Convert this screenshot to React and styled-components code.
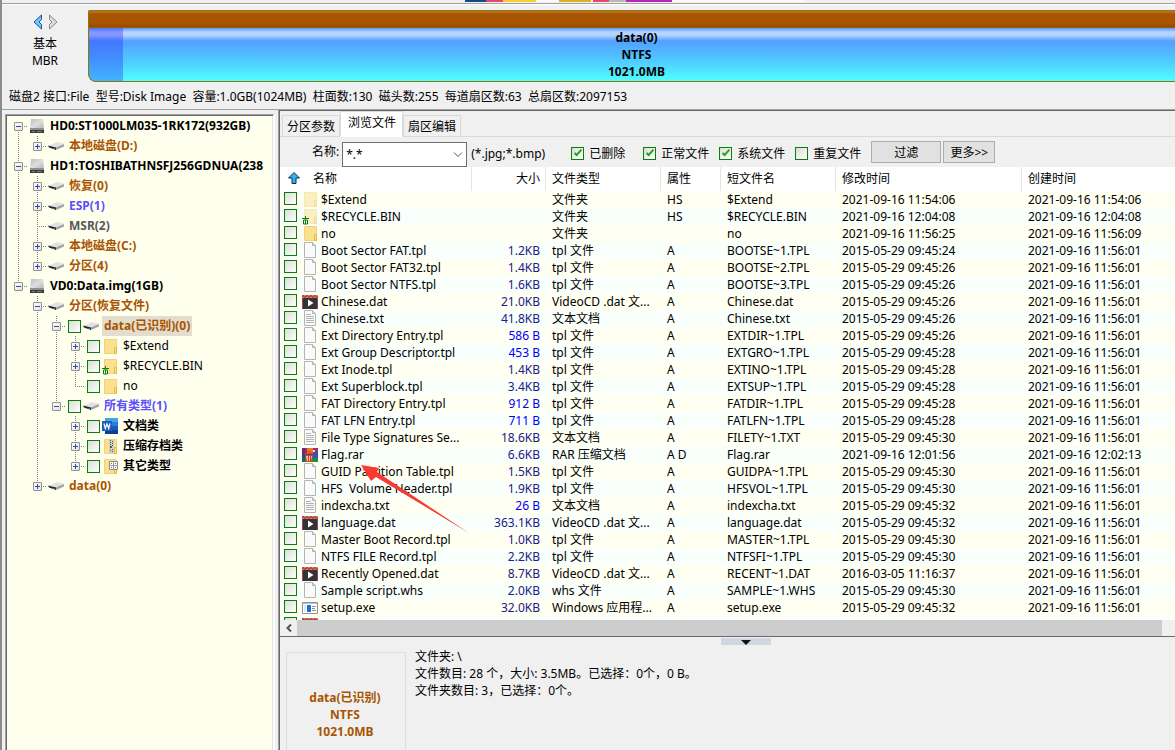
import React from "react";
import styled, { createGlobalStyle, css } from "styled-components";

const sans = `"Noto Sans", "Noto Sans CJK SC", sans-serif`;

const Global = createGlobalStyle`
  *, *::before, *::after { box-sizing: border-box; }
  html, body, #root { height: 100%; margin: 0; }
  body { background: #f0f0f0; color: #000; font: 12px/17px ${sans}; overflow: hidden; }
  button, input, select { font: inherit; color: inherit; margin: 0; }
`;

const Window = styled.div`
  height: 100vh;
  display: flex;
  flex-direction: column;
  border-left: 2px solid #8c8c8c;
  overflow: hidden;
`;

const Strip = styled.svg`
  display: block;
  flex: none;
  height: 3px;
  width: 100%;
`;

const DiskBar = styled.header`
  flex: none;
  display: flex;
  height: 80px;
  padding: 5px 0 0;
  border-top: 1px solid #a0a0a0;
  box-shadow: inset 0 1px #fff;
`;

const DiskNav = styled.div`
  width: 86px;
  flex: none;
  text-align: center;
  padding-top: 5px;
  span { display: block; }
`;

const NavButtons = styled.div`
  display: flex;
  justify-content: center;
  gap: 5px;
  height: 16px;
  margin-bottom: 5px;
`;

const IconButton = styled.button`
  border: 0;
  padding: 0;
  background: none;
  width: 10px;
  height: 16px;
  svg { display: block; }
`;

const Volume = styled.div`
  flex: 1;
  margin-top: 1px;
  height: 72px;
  border: 1px solid #8a7a00;
  border-right: 0;
  border-radius: 2px 0 0 8px;
  overflow: hidden;
  display: flex;
  flex-direction: column;
  background: #a85400;
`;

const VolumeCap = styled.div`
  height: 17px;
  flex: none;
  border-bottom: 1px solid #8a6a00;
  background: linear-gradient(#c07838, #a85400 20%, #a85400 80%, #964600);
`;

const VolumeBody = styled.div`
  flex: 1;
  text-align: center;
  font-weight: 700;
  padding-top: 1px;
  padding-left: 9px;
  background:
    linear-gradient(90deg, rgba(40, 40, 255, 0.35) 34px, transparent 34px),
    linear-gradient(#5c98ff 0, #b4d2ff 4px, #b8d4ff 7px, #52a0ff 13px, #50c8ff 60%, #50ffff 100%);
  span { display: block; }
`;

const DiskInfo = styled.div`
  flex: none;
  height: 27px;
  padding: 5px 0 0 7px;
  white-space: pre;
  border-bottom: 1px solid #a0a0a0;
`;

const Main = styled.main`
  flex: 1;
  min-height: 0;
  display: flex;
`;

const TreePane = styled.nav`
  width: 270px;
  flex: none;
  margin: 4px 4px 0 3px;
  border: solid;
  border-width: 1px 2px 0 1px;
  border-color: #a0a0a0 #fff #fff #a0a0a0;
  background: #ffffee;
  box-shadow: inset 1px 1px #696969, inset -1px 0 #e3e3e3;
  padding: 1px 2px 0 3px;
  overflow: hidden;
  white-space: nowrap;
`;

const TreeRow = styled.div`
  display: flex;
  align-items: center;
  height: 20px;
`;

const dots = css`
  background-image: repeating-linear-gradient(#808080 0 1px, transparent 1px 2px);
  background-size: 1px 100%;
  background-repeat: no-repeat;
`;

const Guide = styled.span`
  width: 19px;
  height: 20px;
  flex: none;
  ${(p) => p.$line && css`${dots} background-position: 9px 0;`}
`;

const Branch = styled.span`
  width: 19px;
  height: 20px;
  flex: none;
  display: grid;
  place-items: center;
  background-repeat: no-repeat;
  background-image:
    ${(p) => (p.$up ? "repeating-linear-gradient(#808080 0 1px, transparent 1px 2px)" : "none")},
    ${(p) => (p.$down ? "repeating-linear-gradient(#808080 0 1px, transparent 1px 2px)" : "none")},
    repeating-linear-gradient(90deg, #808080 0 1px, transparent 1px 2px);
  background-size: 1px 10px, 1px 10px, 10px 1px;
  background-position: 9px 0, 9px 10px, 9px 10px;
`;

const Expander = styled.button`
  width: 9px;
  height: 9px;
  padding: 0;
  border: 1px solid #919191;
  border-radius: 1px;
  background: linear-gradient(135deg, #fff, #e0e0e0);
  svg { display: block; }
`;

const TreeIcon = styled.span`
  display: flex;
  align-items: center;
  gap: 2px;
  margin-left: ${(p) => p.$gap}px;
  margin-right: ${(p) => (p.$kind === "hdd" ? 4 : p.$kind === "drive" ? 2 : 3)}px;
`;

const TreeLabel = styled.span`
  color: ${(p) => p.$color || "#000"};
  font-weight: ${(p) => (p.$plain ? 400 : 700)};
  line-height: 20px;
  padding: 0 2px;
  background: ${(p) => (p.$selected ? "#e2ddcc" : "none")};
`;

const Check = styled.input`
  appearance: none;
  flex: none;
  display: grid;
  place-items: center;
  width: 13px;
  height: 13px;
  border: 1px solid #0a7d0a;
  background: linear-gradient(135deg, #dcdcd7, #fff);
  &:checked::after {
    content: "";
    width: 4px;
    height: 8px;
    margin-top: -2px;
    border: solid #21a121;
    border-width: 0 2px 2px 0;
    transform: rotate(42deg);
  }
`;

const Right = styled.section`
  flex: 1;
  min-width: 0;
  display: flex;
  flex-direction: column;
  border: solid #696969;
  border-width: 1px 0 0 1px;
  box-shadow: -1px 0 #a0a0a0;
`;

const Tabs = styled.div`
  flex: none;
  display: flex;
  align-items: flex-end;
  height: 26px;
  padding-left: 2px;
  box-shadow: inset 0 -1px #d9d9d9;
`;

const Tab = styled.button`
  height: ${(p) => (p.$active ? 26 : 22)}px;
  padding: ${(p) => (p.$active ? "0 7px 3px" : "0 4px")};
  width: ${(p) => (p.$active ? 63 : 58)}px;
  border: 1px solid #d9d9d9;
  border-bottom-color: ${(p) => (p.$active ? "#fff" : "#d9d9d9")};
  background: ${(p) => (p.$active ? "#fff" : "#f0f0f0")};
  white-space: nowrap;
`;

const FilterBar = styled.div`
  flex: none;
  display: flex;
  align-items: center;
  height: 30px;
  padding: 2px 0 0 32px;
  white-space: nowrap;
`;

const MaskLabel = styled.label`
  padding-bottom: 4px;
`;

const Combo = styled.span`
  position: relative;
  margin: 2px 4px 0 3px;
  svg { position: absolute; right: 4px; top: 10px; pointer-events: none; }
`;

const Select = styled.select`
  appearance: none;
  display: block;
  width: 125px;
  height: 25px;
  border: 1px solid #707070;
  border-radius: 0;
  background: #fff;
  padding: 0 3px;
`;

const CheckLabel = styled.label`
  display: flex;
  align-items: center;
  gap: 5px;
  margin-right: ${(p) => p.$after || 10}px;
`;

const Hint = styled.span`
  width: 100px;
`;

const PushButton = styled.button`
  width: ${(p) => p.$w}px;
  height: 22px;
  margin: 0 2px 2px 0;
  padding: 0;
  border: 1px solid #adadad;
  background: #e1e1e1;
`;

const ListBox = styled.div`
  flex: none;
  height: 453px;
  overflow: hidden;
  background: #fff;
`;

const Table = styled.table`
  width: 100%;
  table-layout: fixed;
  border-collapse: separate;
  border-spacing: 0;
  th {
    height: 24px;
    padding: 0 6px 2px;
    font-weight: 400;
    text-align: left;
    border-right: 1px solid #e5e5e5;
    white-space: nowrap;
  }
  th:nth-child(2) { text-align: right; padding-right: 5px; }
  th:last-child { border: 0; }
  td {
    height: 17px;
    padding: 0 0 0 6px;
    white-space: pre;
    overflow: hidden;
  }
  tbody tr:nth-child(odd) { background: #fffff2; }
  tbody tr:nth-child(even) { background: #f9fffa; }
`;

const NameCell = styled.div`
  display: flex;
  align-items: center;
  height: 17px;
  margin-left: -2px;
  svg { flex: none; margin: 0 3px 0 5px; }
  input { margin-bottom: 2px; }
`;

const HeadName = styled.span`
  display: flex;
  align-items: center;
  gap: 13px;
  padding-left: 2px;
`;

const SizeText = styled.div`
  text-align: right;
  padding-right: 6px;
  color: ${(p) => (p.$bytes ? "#0000ff" : "#20208c")};
`;

const Scroll = styled.div`
  flex: none;
  display: flex;
  height: 17px;
  background: #f0f0f0;
  border-bottom: 1px solid #696969;
`;

const ScrollArrow = styled.button`
  width: 17px;
  padding: 0;
  border: 0;
  background: none;
  display: grid;
  place-items: center;
`;

const Thumb = styled.div`
  flex: 1;
  margin-right: 13px;
  background: #cdcdcd;
`;

const Summary = styled.div`
  flex: 1;
  display: flex;
  align-items: stretch;
  min-height: 0;
  padding: 0 0 0 6px;
  position: relative;
`;

const Grip = styled.button`
  position: absolute;
  left: 441px;
  top: 1px;
  width: 50px;
  height: 7px;
  padding: 0;
  border: 0;
  background: #cfd8e2;
  svg { display: block; margin: 0 auto; }
`;

const VolumeCard = styled.div`
  width: 120px;
  margin-top: 15px;
  border: 1px solid #dcdcdc;
  border-bottom: 0;
  padding: 36px 2px 0 0;
  text-align: center;
  font-weight: 700;
  color: #a85400;
  span { display: block; }
`;

const SummaryText = styled.div`
  padding: 11px 0 0 9px;
  white-space: pre;
`;

const Arrow = styled.svg`
  position: absolute;
  left: 361px;
  top: 464px;
  pointer-events: none;
`;

const Hdd = () => (
  <svg width="14" height="16" viewBox="0 0 14 16">
    <defs>
      <linearGradient id="hddTop" x1="0" y1="0" x2="1" y2="1">
        <stop offset="0" stopColor="#bdbdbd" />
        <stop offset=".5" stopColor="#dedede" />
        <stop offset="1" stopColor="#b2b2b2" />
      </linearGradient>
    </defs>
    <path d="M1 1h12l1 10H0z" fill="url(#hddTop)" />
    <path d="M0 10h14v2H0z" fill="#8f8f8f" />
    <path d="M0 12h14v3H0z" fill="#3c3c3c" />
    <path d="M2 13h3v1H2zM7 13h5v1H7z" fill="#7a7a7a" />
  </svg>
);
const Drive = () => (
  <svg width="17" height="10" viewBox="0 0 17 10">
    <path d="M7 6l9-3v2.500L8 9z" fill="#a4a4a8" />
    <path d="M1 4.500L9 1l7 1.500L8 6.500z" fill="#e2e2e4" />
    <path d="M0 4.500l8 2V9L1 6.500z" fill="#262626" />
    <path d="M5 7h2v1H5z" fill="#2f8a3a" />
  </svg>
);
const Bin = () => (
  <g stroke="#0a7d0a" fill="none">
    <path d="M0 10.500h7M3.500 8v2" />
    <path d="M1.500 12v4h4v-4z" fill="#fff" />
    <path d="M3.500 12v4" />
  </g>
);
const Folder = ({ bin, faded, deco }) => (
  <svg width="16" height="17" viewBox="0 0 16 17">
    <g opacity={faded ? 0.5 : 1}>
      <path d="M2.500 1.500h12v14h-12z" fill="#fbe08d" stroke="#f1d274" />
      <path d="M12.500 9.500h2v6h-2z" fill="#fbe08d" stroke="#e3bb48" />
    </g>
    {bin && <Bin />}
    {deco === "zip" && (
      <g>
        <path d="M7 1h5v14H7z" fill="#d0d0c4" />
        <path d="M8 2h1v1H8zM10 3h1v1h-1zM8 4h1v1H8zM10 5h1v1h-1zM8 6h1v1H8zM10 7h1v1h-1zM8 8h2v2H8zM10 11h1v1h-1zM8 12h1v1H8zM10 13h1v1h-1z" fill="#555" />
      </g>
    )}
    {deco === "grid" && (
      <g>
        <path d="M7.500 3.500h8v8h-8z" fill="#fff" stroke="#8a8a8a" />
        <path d="M11.500 3.500v8M7.500 7.500h8" stroke="#999" />
        <path d="M9 5h1v1H9zM13 9h1v1h-1z" fill="#d04030" />
        <path d="M13 5h1v1h-1zM9 9h1v1H9z" fill="#3a6ad0" />
      </g>
    )}
  </svg>
);
const Word = () => (
  <svg width="16" height="16" viewBox="0 0 16 16">
    <path d="M3 0h13v4H3z" fill="#41a5ee" />
    <path d="M3 4h13v4H3z" fill="#2b7cd3" />
    <path d="M3 8h13v4H3z" fill="#185abd" />
    <path d="M3 12h13v4H3z" fill="#103f91" />
    <path d="M0 3h10v10H0z" fill="#1b5cbe" />
    <path d="M2 5.500l1.300 5L5 6l1.700 4.500L8 5.500" fill="none" stroke="#fff" strokeWidth="1.200" />
  </svg>
);
const Page = ({ lines }) => (
  <svg width="16" height="17" viewBox="0 0 16 17">
    <path d="M2.500 .5h8l3 3v12h-11z" fill="#fafafa" stroke="#b4b4b4" />
    <path d="M10.500 .5v3h3" fill="#d6d6d6" stroke="#b4b4b4" />
    {lines && <path d="M4 4.500h5M4 6.500h8M4 8.500h8M4 10.500h8M4 12.500h8" stroke="#b4b4b4" />}
  </svg>
);
const Video = () => (
  <svg width="16" height="16" viewBox="0 0 16 16">
    <path d="M0 1h16v14H0z" fill="#333338" />
    <path d="M0 1h16v3H0z" fill="#b84a48" />
    <path d="M2 1h2v1H2zM6 1h2v1H6zM10 1h2v1h-2zM14 1h2v1h-2zM0 3h2v1H0zM4 3h2v1H4zM8 3h2v1H8zM12 3h2v1h-2z" fill="#dc8060" />
    <path d="M0 4h1v11H0zM15 4h1v11h-1z" fill="#8a4a58" />
    <path d="M6 5.500l5.500 3.500L6 12.500z" fill="#fff" />
  </svg>
);
const Rar = () => (
  <svg width="16" height="16" viewBox="0 0 16 16">
    <path d="M0 1h16v5H0z" fill="#a02878" />
    <path d="M0 6h16v5H0z" fill="#2858c0" />
    <path d="M0 11h16v4H0z" fill="#1f9040" />
    <path d="M0 1h3v14H0z" fill="#333" opacity=".4" />
    <path d="M5 1h6v5H5z" fill="#e87a20" />
    <path d="M2.500 6.500h9M5.500 4.500h3v2" stroke="#e03818" fill="none" />
    <path d="M3.500 8.500h7l-1 6h-5z" stroke="#e03818" fill="#f8c8a8" />
    <path d="M6.500 8v6M8.500 8v6" stroke="#e03818" />
    <path d="M11 3h2v2h-2z" fill="#ddd" />
  </svg>
);
const Exe = () => (
  <svg width="16" height="14" viewBox="0 0 16 14">
    <path d="M.5 1.500h15v11H.5z" fill="#fff" stroke="#8d9399" />
    <path d="M1 2h14v1H1z" fill="#b9c0c8" />
    <path d="M5 4h4v7H5z" fill="#1273d6" />
    <path d="M10 5.500h4M10 7.500h3M10 9.500h4" stroke="#8d9399" />
    <path d="M2 4h2v7H2z" fill="#dfe6ee" />
  </svg>
);

const ICONS = {
  hdd: <Hdd />,
  drive: <Drive />,
  folder: <Folder />,
  faded: <Folder faded />,
  bin: <Folder bin />,
  fadedBin: <Folder bin faded />,
  word: <Word />,
  zip: <Folder deco="zip" />,
  grid: <Folder deco="grid" />,
  page: <Page />,
  text: <Page lines />,
  video: <Video />,
  rar: <Rar />,
  exe: <Exe />,
};

const BROWN = "#a85400";
const BLUE = "#5a50ff";

/* g: one flag per ancestor column; l: links up (u) and down (d); s: expander sign */
const TREE = [
  { g: [], l: "d", s: "-", icon: "hdd", t: "HD0:ST1000LM035-1RK172(932GB)" },
  { g: [1], l: "u", s: "+", icon: "drive", t: "本地磁盘(D:)", c: BROWN },
  { g: [], l: "ud", s: "-", icon: "hdd", t: "HD1:TOSHIBATHNSFJ256GDNUA(238" },
  { g: [1], l: "ud", s: "+", icon: "drive", t: "恢复(0)", c: BROWN },
  { g: [1], l: "ud", s: "+", icon: "drive", t: "ESP(1)", c: BLUE },
  { g: [1], l: "ud", s: "", icon: "drive", t: "MSR(2)", c: "#585858" },
  { g: [1], l: "ud", s: "+", icon: "drive", t: "本地磁盘(C:)", c: BROWN },
  { g: [1], l: "u", s: "+", icon: "drive", t: "分区(4)", c: BROWN },
  { g: [], l: "u", s: "-", icon: "hdd", t: "VD0:Data.img(1GB)" },
  { g: [0], l: "ud", s: "-", icon: "drive", t: "分区(恢复文件)", c: BROWN },
  { g: [0, 1], l: "ud", s: "-", check: 1, icon: "drive", t: "data(已识别)(0)", c: BROWN, sel: 1 },
  { g: [0, 1, 1], l: "ud", s: "+", check: 1, icon: "folder", t: "$Extend", plain: 1 },
  { g: [0, 1, 1], l: "ud", s: "+", check: 1, icon: "bin", t: "$RECYCLE.BIN", plain: 1 },
  { g: [0, 1, 1], l: "u", s: "", check: 1, icon: "folder", t: "no", plain: 1 },
  { g: [0, 1], l: "u", s: "-", check: 1, icon: "drive", t: "所有类型(1)", c: BLUE },
  { g: [0, 1, 0], l: "ud", s: "+", check: 1, icon: "word", t: "文档类" },
  { g: [0, 1, 0], l: "ud", s: "+", check: 1, icon: "zip", t: "压缩存档类" },
  { g: [0, 1, 0], l: "u", s: "+", check: 1, icon: "grid", t: "其它类型" },
  { g: [0], l: "u", s: "+", icon: "drive", t: "data(0)", c: BROWN },
].map((n) => (n.g.length === 3 && !n.g[2] ? { ...n, g: [0, 0, 0] } : n));

const A = "2021-09-16 11:56:01";
const FILES = [
  ["faded", "$Extend", "", "文件夹", "HS", "$Extend", "2021-09-16 11:54:06", "2021-09-16 11:54:06"],
  ["fadedBin", "$RECYCLE.BIN", "", "文件夹", "HS", "$RECYCLE.BIN", "2021-09-16 12:04:08", "2021-09-16 12:04:08"],
  ["folder", "no", "", "文件夹", "", "no", "2021-09-16 11:56:25", "2021-09-16 11:56:09"],
  ["page", "Boot Sector FAT.tpl", "1.2KB", "tpl 文件", "A", "BOOTSE~1.TPL", "2015-05-29 09:45:24", A],
  ["page", "Boot Sector FAT32.tpl", "1.4KB", "tpl 文件", "A", "BOOTSE~2.TPL", "2015-05-29 09:45:26", A],
  ["page", "Boot Sector NTFS.tpl", "1.6KB", "tpl 文件", "A", "BOOTSE~3.TPL", "2015-05-29 09:45:26", A],
  ["video", "Chinese.dat", "21.0KB", "VideoCD .dat 文...", "A", "Chinese.dat", "2015-05-29 09:45:26", A],
  ["text", "Chinese.txt", "41.8KB", "文本文档", "A", "Chinese.txt", "2015-05-29 09:45:26", A],
  ["page", "Ext Directory Entry.tpl", "586 B", "tpl 文件", "A", "EXTDIR~1.TPL", "2015-05-29 09:45:26", A],
  ["page", "Ext Group Descriptor.tpl", "453 B", "tpl 文件", "A", "EXTGRO~1.TPL", "2015-05-29 09:45:28", A],
  ["page", "Ext Inode.tpl", "1.4KB", "tpl 文件", "A", "EXTINO~1.TPL", "2015-05-29 09:45:28", A],
  ["page", "Ext Superblock.tpl", "3.4KB", "tpl 文件", "A", "EXTSUP~1.TPL", "2015-05-29 09:45:28", A],
  ["page", "FAT Directory Entry.tpl", "912 B", "tpl 文件", "A", "FATDIR~1.TPL", "2015-05-29 09:45:28", A],
  ["page", "FAT LFN Entry.tpl", "711 B", "tpl 文件", "A", "FATLFN~1.TPL", "2015-05-29 09:45:28", A],
  ["text", "File Type Signatures Se...", "18.6KB", "文本文档", "A", "FILETY~1.TXT", "2015-05-29 09:45:30", A],
  ["rar", "Flag.rar", "6.6KB", "RAR 压缩文档", "A D", "Flag.rar", "2021-09-16 12:01:56", "2021-09-16 12:02:13"],
  ["page", "GUID Partition Table.tpl", "1.5KB", "tpl 文件", "A", "GUIDPA~1.TPL", "2015-05-29 09:45:30", A],
  ["page", "HFS  Volume Header.tpl", "1.9KB", "tpl 文件", "A", "HFSVOL~1.TPL", "2015-05-29 09:45:30", A],
  ["text", "indexcha.txt", "26 B", "文本文档", "A", "indexcha.txt", "2015-05-29 09:45:32", A],
  ["video", "language.dat", "363.1KB", "VideoCD .dat 文...", "A", "language.dat", "2015-05-29 09:45:32", A],
  ["page", "Master Boot Record.tpl", "1.0KB", "tpl 文件", "A", "MASTER~1.TPL", "2015-05-29 09:45:30", A],
  ["page", "NTFS FILE Record.tpl", "2.2KB", "tpl 文件", "A", "NTFSFI~1.TPL", "2015-05-29 09:45:30", A],
  ["video", "Recently Opened.dat", "8.7KB", "VideoCD .dat 文...", "A", "RECENT~1.DAT", "2016-03-05 11:16:37", A],
  ["page", "Sample script.whs", "2.0KB", "whs 文件", "A", "SAMPLE~1.WHS", "2015-05-29 09:45:30", A],
  ["exe", "setup.exe", "32.0KB", "Windows 应用程...", "A", "setup.exe", "2015-05-29 09:45:32", A],
  ["video", "", "", "", "", "", "", ""],
];

const COLUMNS = [192, 74, 115, 60, 115, 186, null];

export default function App() {
  return (
    <Window>
      <Global />
      <Strip aria-hidden="true">
        <path d="M463 0h21v2h-21z" fill="#124a86" />
        <path d="M484 0h17v2h-17z" fill="#e8466a" />
        <path d="M501 0h33v2h-33z" fill="#f8cf2c" />
        <path d="M534 0h268v2H534z" fill="#fafafa" />
        <path d="M557 0h32v2h-32z" fill="#d9b422" />
        <path d="M591 0h16v2h-16z" fill="#e8466a" />
        <path d="M607 0h17v2h-17z" fill="#b8b8b8" />
        <path d="M624 0h46v2h-46z" fill="#b828b8" />
      </Strip>
      <DiskBar>
        <DiskNav>
          <NavButtons>
            <IconButton aria-label="上一磁盘">
              <svg width="10" height="16"><path d="M8.500 1v4.500L6 8l2.500 2.500V15L1 8z" fill="#6cc8ff" stroke="#1c4f9c" /></svg>
            </IconButton>
            <IconButton aria-label="下一磁盘">
              <svg width="10" height="16"><path d="M1.500 1v4.500L4 8l-2.500 2.500V15L9 8z" fill="#dcdcdc" stroke="#8c8c8c" /></svg>
            </IconButton>
          </NavButtons>
          <span>基本</span>
          <span>MBR</span>
        </DiskNav>
        <Volume>
          <VolumeCap />
          <VolumeBody>
            <span>data(0)</span>
            <span>NTFS</span>
            <span>1021.0MB</span>
          </VolumeBody>
        </Volume>
      </DiskBar>
      <DiskInfo>{"磁盘2 接口:File  型号:Disk Image  容量:1.0GB(1024MB)  柱面数:130  磁头数:255  每道扇区数:63  总扇区数:2097153"}</DiskInfo>
      <Main>
        <TreePane>
          {TREE.map((n, i) => (
            <TreeRow key={i}>
              {(n.g.length === 3 ? [0, 1, i < 14 ? 1 : 0] : n.g).map((v, k) => <Guide key={k} $line={v} />)}
              <Branch $up={n.l.includes("u")} $down={n.l.includes("d")}>
                {n.s && (
                  <Expander aria-label={n.s === "+" ? "展开" : "折叠"}>
                    <svg width="7" height="7"><path d={n.s === "+" ? "M1 3.500h5M3.500 1v5" : "M1 3.500h5"} stroke="#2b4fa8" /></svg>
                  </Expander>
                )}
              </Branch>
              <TreeIcon $gap={n.check || n.icon === "hdd" ? 2 : 1} $kind={n.icon}>
                {n.check && <Check type="checkbox" aria-label={n.t} />}
                {ICONS[n.icon]}
              </TreeIcon>
              <TreeLabel $color={n.c} $plain={n.plain} $selected={n.sel}>{n.t}</TreeLabel>
            </TreeRow>
          ))}
        </TreePane>
        <Right>
          <Tabs role="tablist">
            <Tab role="tab">分区参数</Tab>
            <Tab role="tab" $active>浏览文件</Tab>
            <Tab role="tab">扇区编辑</Tab>
          </Tabs>
          <FilterBar>
            <MaskLabel htmlFor="mask">名称:</MaskLabel>
            <Combo>
              <Select id="mask" defaultValue="*.*"><option>*.*</option></Select>
              <svg width="10" height="6"><path d="M1 .5l4 4 4-4" fill="none" stroke="#505050" /></svg>
            </Combo>
            <Hint>(*.jpg;*.bmp)</Hint>
            <CheckLabel $after={18}><Check type="checkbox" defaultChecked />已删除</CheckLabel>
            <CheckLabel><Check type="checkbox" defaultChecked />正常文件</CheckLabel>
            <CheckLabel><Check type="checkbox" defaultChecked />系统文件</CheckLabel>
            <CheckLabel><Check type="checkbox" />重复文件</CheckLabel>
            <PushButton $w={70}>过滤</PushButton>
            <PushButton $w={52}>更多&gt;&gt;</PushButton>
          </FilterBar>
          <ListBox>
            <Table>
              <colgroup>{COLUMNS.map((w, i) => <col key={i} width={w || undefined} />)}</colgroup>
              <thead>
                <tr>
                  <th>
                    <HeadName>
                      <svg width="12" height="12"><path d="M6 .5l5.500 5.500H8v5.500H4V6H.5z" fill="#38b0f0" stroke="#0c2c50" /></svg>
                      名称
                    </HeadName>
                  </th>
                  <th>大小</th>
                  <th>文件类型</th>
                  <th>属性</th>
                  <th>短文件名</th>
                  <th>修改时间</th>
                  <th>创建时间</th>
                </tr>
              </thead>
              <tbody>
                {FILES.map(([icon, name, size, ...rest], i) => (
                  <tr key={i}>
                    <td>
                      <NameCell>
                        <Check type="checkbox" aria-label={name || "file"} />
                        {ICONS[icon]}
                        {name}
                      </NameCell>
                    </td>
                    <td><SizeText $bytes={size.endsWith(" B")}>{size}</SizeText></td>
                    {rest.map((v, k) => <td key={k}>{v}</td>)}
                  </tr>
                ))}
              </tbody>
            </Table>
          </ListBox>
          <Scroll>
            <ScrollArrow aria-label="向左滚动">
              <svg width="6" height="8"><path d="M5 .5L1.500 4 5 7.500" fill="none" stroke="#505050" strokeWidth="2" /></svg>
            </ScrollArrow>
            <Thumb />
          </Scroll>
          <Summary>
            <Grip aria-label="折叠面板"><svg width="10" height="6"><path d="M0 1h10L5 6z" fill="#111" /></svg></Grip>
            <VolumeCard>
              <span>data(已识别)</span>
              <span>NTFS</span>
              <span>1021.0MB</span>
            </VolumeCard>
            <SummaryText>{"文件夹: \\\n文件数目: 28 个，大小: 3.5MB。已选择：0个，0 B。\n文件夹数目: 3，已选择：0个。"}</SummaryText>
          </Summary>
        </Right>
      </Main>
      <Arrow width="110" height="70" aria-hidden="true">
        <path d="M0 1l18 3-2 4 92 61L15 13l-5 4z" fill="#f93a33" />
      </Arrow>
    </Window>
  );
}
